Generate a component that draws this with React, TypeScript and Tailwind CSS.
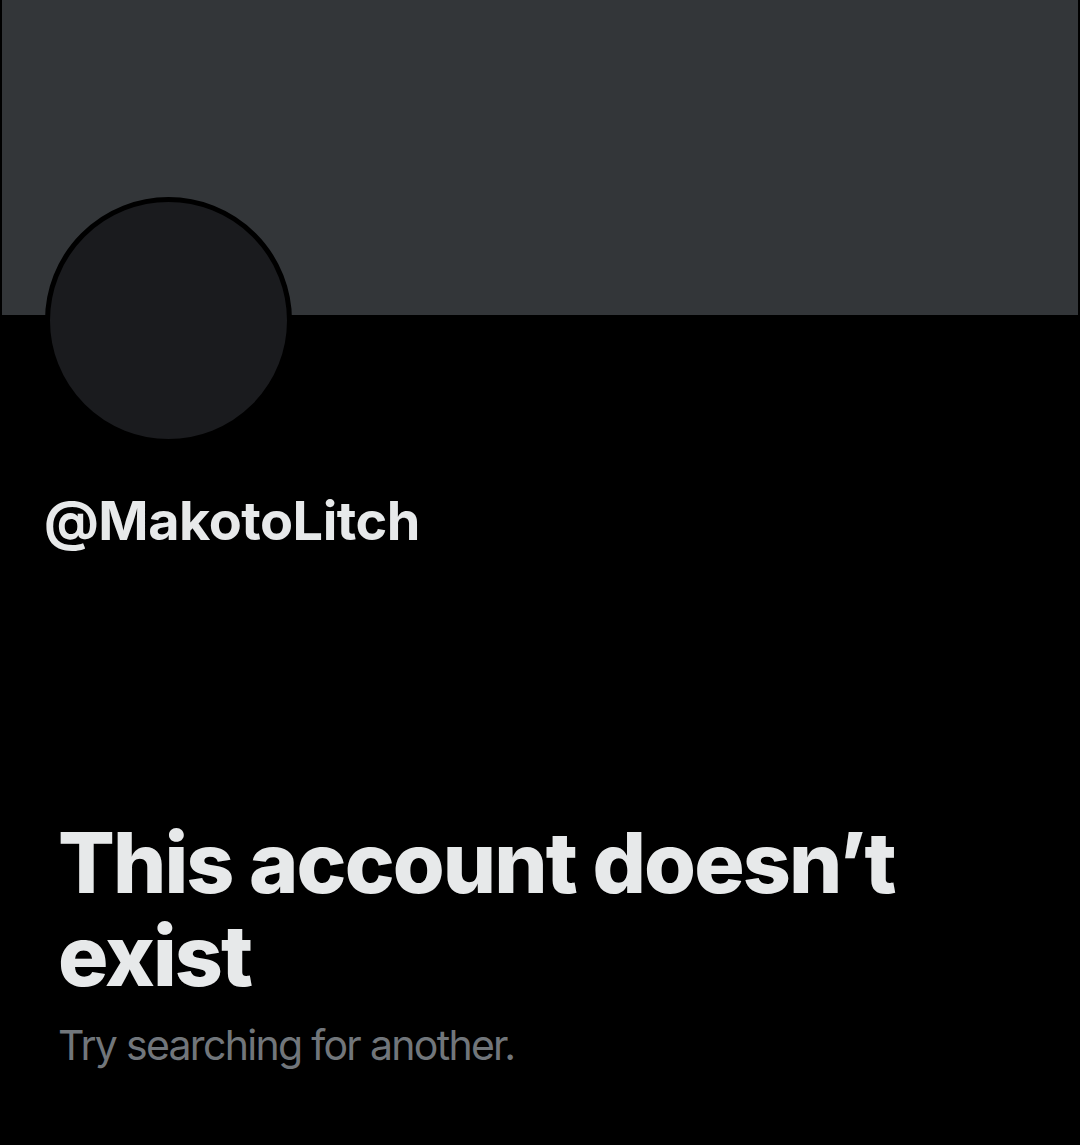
export default function App() {
  return (
    <div className="w-[1080px] h-[1145px] bg-black overflow-hidden font-['Inter',sans-serif] text-[#e7e9ea]">
      {/* Banner */}
      <div className="mx-[2px] h-[315px] bg-[#333639]" />

      {/* Avatar */}
      <div className="relative ml-[45px] -mt-[118px] w-[247px] h-[247px] rounded-full border-[5px] border-black bg-[#1a1b1e]" />

      {/* Handle */}
      <div className="ml-[44px] mt-[44px] text-[54px] leading-[66px] font-bold tracking-[-0.5px]">
        @MakotoLitch
      </div>

      {/* Empty state */}
      <div className="pl-[58px] pr-[60px] mt-[262px]">
        <h1 className="text-[84px] leading-[93px] font-extrabold tracking-[-1.9px]">
          This account doesn’t exist
        </h1>
        <p className="mt-[18px] text-[41px] leading-[50px] text-[#71767b] tracking-[-1.7px]">
          Try searching for another.
        </p>
      </div>
    </div>
  )
}
